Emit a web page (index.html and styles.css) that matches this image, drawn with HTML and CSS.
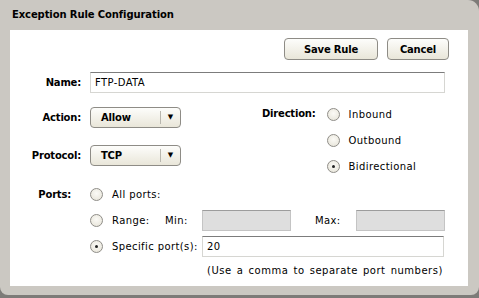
FILE: index.html
```html
<!DOCTYPE html>
<html lang="en">
<head>
    <meta charset="UTF-8">
    <title>Exception Rule Configuration</title>
    <link rel="stylesheet" href="styles.css">
</head>
<body>
    <div class="dialog">
        <div class="titlebar">Exception Rule Configuration</div>

        <div class="content">
            <div class="actions">
                <button class="btn save">Save Rule</button>
                <button class="btn cancel">Cancel</button>
            </div>

            <div class="row name-row">
                <label class="label">Name:</label>
                <div class="textbox wide">FTP-DATA</div>
            </div>

            <div class="middle">
                <div class="left-col">
                    <div class="row select-row">
                        <label class="label">Action:</label>
                        <div class="select"><span class="select-text">Allow</span><span class="select-arrow">&#9660;</span></div>
                    </div>
                    <div class="row select-row protocol">
                        <label class="label">Protocol:</label>
                        <div class="select"><span class="select-text">TCP</span><span class="select-arrow">&#9660;</span></div>
                    </div>
                </div>

                <div class="right-col">
                    <label class="label dir-label">Direction:</label>
                    <div class="radio-list">
                        <div class="radio-line"><span class="radio"></span>Inbound</div>
                        <div class="radio-line"><span class="radio"></span>Outbound</div>
                        <div class="radio-line"><span class="radio checked"></span>Bidirectional</div>
                    </div>
                </div>
            </div>

            <div class="ports">
                <label class="label ports-label">Ports:</label>
                <div class="port-list">
                    <div class="radio-line port-line"><span class="radio"></span>All ports:</div>
                    <div class="radio-line port-line">
                        <span class="radio"></span><span class="range-text">Range:</span><span class="min-text">Min:</span>
                        <div class="textbox range disabled"></div>
                        <span class="max-text">Max:</span>
                        <div class="textbox range disabled"></div>
                    </div>
                    <div class="radio-line port-line">
                        <span class="radio checked"></span><span class="specific-text">Specific port(s):</span>
                        <div class="textbox specific">20</div>
                    </div>
                    <div class="note">(Use a comma to separate port numbers)</div>
                </div>
            </div>
        </div>
    </div>
    <div class="backdrop"></div>
</body>
</html>
```

FILE: styles.css
```css
body {
    margin: 0;
    width: 479px;
    height: 298px;
    overflow: hidden;
    background-color: #7d7b78;
    font-family: "DejaVu Sans", Verdana, sans-serif;
    font-size: 10px;
    color: #000;
}

.dialog {
    width: 479px;
    height: 295px;
    background-color: #cbc8c2;
    border-radius: 0 11px 8px 8px;
    box-sizing: border-box;
    padding: 0 11px 0 10px;
}

.titlebar {
    height: 30px;
    line-height: 30px;
    padding-left: 2px;
    font-weight: bold;
    font-size: 10px;
    letter-spacing: -0.1px;
}

.content {
    background-color: #fff;
    height: 256px;
}

.actions {
    display: flex;
    justify-content: flex-end;
    gap: 9px;
    padding: 8px 19px 0 0;
}

.btn {
    height: 22px;
    padding: 0;
    border: 1px solid #8e8c86;
    border-radius: 4px;
    background: linear-gradient(#fdfdfb, #e9e6d9);
    font-family: "DejaVu Sans", Verdana, sans-serif;
    font-size: 10px;
    font-weight: bold;
    color: #000;
    letter-spacing: -0.2px;
}

.save {
    width: 94px;
}

.cancel {
    width: 62px;
}

.row {
    display: flex;
    align-items: center;
}

.label {
    font-weight: bold;
    letter-spacing: -0.2px;
}

.row .label {
    width: 71px;
    text-align: right;
    margin-right: 9px;
}

.name-row {
    margin-top: 12px;
}

.textbox {
    height: 21px;
    box-sizing: border-box;
    border: 1px solid #d6d6d2;
    border-top-color: #7c7c7c;
    line-height: 19px;
    padding-left: 4px;
    background-color: #fff;
    letter-spacing: 0.4px;
}

.wide {
    width: 355px;
}

.middle {
    display: flex;
    margin-top: 14px;
}

.left-col {
    width: 252px;
}

.select-row {
    height: 21px;
}

.protocol {
    margin-top: 17px;
}

.select {
    width: 91px;
    height: 21px;
    box-sizing: border-box;
    border: 1px solid #8e8c86;
    border-radius: 4px;
    background: linear-gradient(#fdfdfb, #e9e6d9);
    display: flex;
    align-items: center;
}

.select-text {
    flex: 1;
    padding-left: 10px;
    font-weight: bold;
    letter-spacing: -0.2px;
}

.select-arrow {
    width: 19px;
    height: 13px;
    border-left: 1px solid #b8b6ae;
    text-align: center;
    font-size: 7px;
    line-height: 13px;
}

.right-col {
    display: flex;
    align-items: flex-start;
}

.dir-label {
    margin-top: 1px;
    margin-right: 11px;
}

.radio-list {
    display: flex;
    flex-direction: column;
    gap: 13px;
    padding-top: 1px;
}

.radio-line {
    display: flex;
    align-items: center;
    height: 13px;
    letter-spacing: 0.4px;
}

.radio {
    width: 13px;
    height: 13px;
    box-sizing: border-box;
    border: 1px solid #8f8d88;
    border-radius: 50%;
    background: radial-gradient(circle at 50% 40%, #fbfaf6, #e5e2d6);
    margin-right: 9px;
    flex: none;
    position: relative;
}

.radio.checked::after {
    content: "";
    position: absolute;
    left: 4px;
    top: 4px;
    width: 3px;
    height: 3px;
    border-radius: 50%;
    background-color: #222;
}

.ports {
    display: flex;
    margin-top: 11px;
}

.ports-label {
    width: 61px;
    text-align: right;
    margin-right: 19px;
    line-height: 21px;
}

.port-list {
    display: flex;
    flex-direction: column;
}

.port-line {
    height: 21px;
}

.port-line + .port-line {
    margin-top: 5px;
}

.range-text {
    width: 53px;
}

.min-text {
    width: 37px;
}

.range {
    width: 89px;
}

.disabled {
    background-color: #dedede;
    border-color: #c4c4c4;
    border-top-color: #9c9c9c;
}

.max-text {
    width: 41px;
    margin-left: 24px;
}

.specific-text {
    width: 90px;
}

.specific {
    width: 242px;
}

.note {
    margin-top: 8px;
    padding-left: 117px;
    letter-spacing: 0.5px;
    word-spacing: 1.5px;
}

.backdrop {
    height: 3px;
}
```
